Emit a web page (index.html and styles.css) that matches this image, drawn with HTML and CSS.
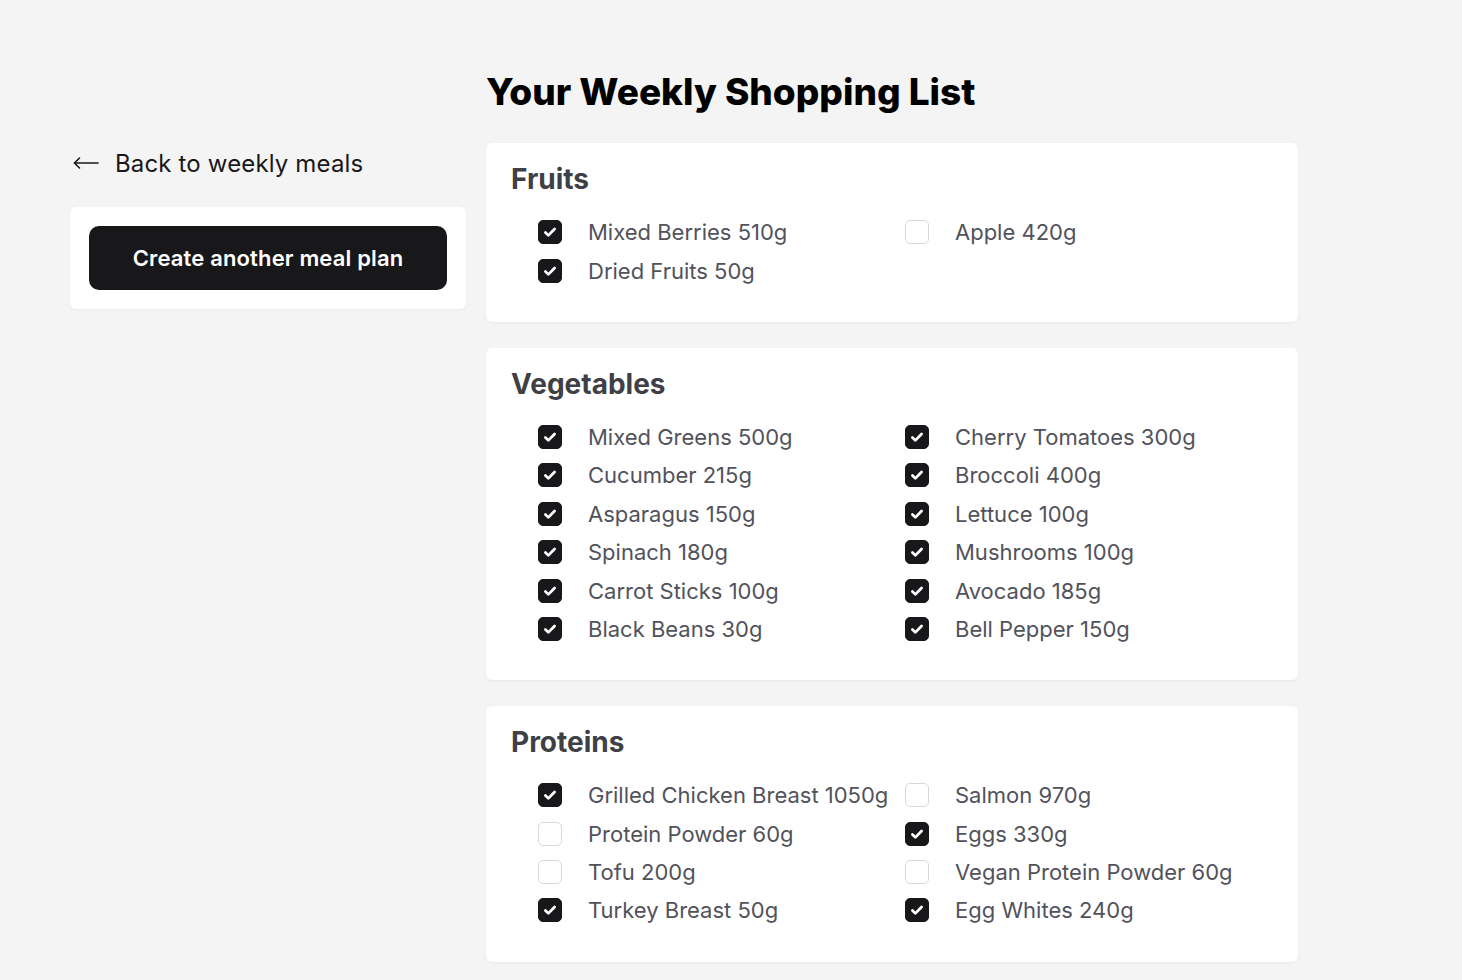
FILE: index.html
```html
<!DOCTYPE html>
<html lang="en">
<head>
<meta charset="utf-8">
<title>Your Weekly Shopping List</title>
<link rel="stylesheet" href="styles.css">
</head>
<body>
<div class="page">
  <aside class="side">
    <a class="back" href="#">
      <svg class="back-icon" width="26" height="14" viewBox="0 0 26 14" fill="none" stroke="#18181b" stroke-width="1.6" stroke-linecap="round" stroke-linejoin="round"><path d="M1.5 7H25"/><path d="M6.5 2L1.5 7L6.5 12"/></svg>
      <span>Back to weekly meals</span>
    </a>
    <div class="side-card">
      <button class="btn">Create another meal plan</button>
    </div>
  </aside>
  <main class="main">
    <h1 class="title">Your Weekly Shopping List</h1>

    <section class="card">
      <h2 class="card-title">Fruits</h2>
      <ul class="items">
        <li class="item"><span class="box checked"></span><span>Mixed Berries 510g</span></li>
        <li class="item"><span class="box"></span><span>Apple 420g</span></li>
        <li class="item"><span class="box checked"></span><span>Dried Fruits 50g</span></li>
      </ul>
    </section>

    <section class="card">
      <h2 class="card-title">Vegetables</h2>
      <ul class="items">
        <li class="item"><span class="box checked"></span><span>Mixed Greens 500g</span></li>
        <li class="item"><span class="box checked"></span><span>Cherry Tomatoes 300g</span></li>
        <li class="item"><span class="box checked"></span><span>Cucumber 215g</span></li>
        <li class="item"><span class="box checked"></span><span>Broccoli 400g</span></li>
        <li class="item"><span class="box checked"></span><span>Asparagus 150g</span></li>
        <li class="item"><span class="box checked"></span><span>Lettuce 100g</span></li>
        <li class="item"><span class="box checked"></span><span>Spinach 180g</span></li>
        <li class="item"><span class="box checked"></span><span>Mushrooms 100g</span></li>
        <li class="item"><span class="box checked"></span><span>Carrot Sticks 100g</span></li>
        <li class="item"><span class="box checked"></span><span>Avocado 185g</span></li>
        <li class="item"><span class="box checked"></span><span>Black Beans 30g</span></li>
        <li class="item"><span class="box checked"></span><span>Bell Pepper 150g</span></li>
      </ul>
    </section>

    <section class="card">
      <h2 class="card-title">Proteins</h2>
      <ul class="items">
        <li class="item"><span class="box checked"></span><span>Grilled Chicken Breast 1050g</span></li>
        <li class="item"><span class="box"></span><span>Salmon 970g</span></li>
        <li class="item"><span class="box"></span><span>Protein Powder 60g</span></li>
        <li class="item"><span class="box checked"></span><span>Eggs 330g</span></li>
        <li class="item"><span class="box"></span><span>Tofu 200g</span></li>
        <li class="item"><span class="box"></span><span>Vegan Protein Powder 60g</span></li>
        <li class="item"><span class="box checked"></span><span>Turkey Breast 50g</span></li>
        <li class="item"><span class="box checked"></span><span>Egg Whites 240g</span></li>
      </ul>
    </section>
  </main>
</div>
</body>
</html>
```
FILE: styles.css
```css
* { box-sizing: border-box; }
html, body { margin: 0; padding: 0; }
body {
  background: #f4f4f4;
  font-family: Inter, "Noto Sans", sans-serif;
  color: #18181b;
}
.page {
  display: flex;
  gap: 20px;
  padding: 72px 0 40px 70px;
}
.side {
  width: 396px;
  flex: none;
  padding-top: 75px;
}
.back {
  display: flex;
  align-items: center;
  gap: 16px;
  height: 32px;
  padding-left: 3px;
  font-size: 24px;
  letter-spacing: 0.15px;
  color: #18181b;
  text-decoration: none;
  margin-bottom: 28px;
}
.back-icon { flex: none; }
.side-card {
  background: #fff;
  border-radius: 6px;
  padding: 19px;
  box-shadow: 0 1px 2px rgba(0,0,0,0.04);
}
.btn {
  display: block;
  width: 100%;
  height: 64px;
  border: 0;
  border-radius: 10px;
  background: #18181b;
  color: #fff;
  font-family: Inter, "Noto Sans", sans-serif;
  font-size: 22px;
  font-weight: 600;
  letter-spacing: 0.15px;
  cursor: pointer;
}
.main {
  width: 812px;
  flex: none;
}
.title {
  margin: 0 0 31px 0;
  font-size: 37px;
  line-height: 40px;
  font-weight: 800;
  color: #000;
  letter-spacing: 0;
}
.card {
  background: #fff;
  border-radius: 6px;
  padding: 20px 26px 32px;
  margin-bottom: 26px;
  box-shadow: 0 1px 3px rgba(0,0,0,0.05);
}
.card-title {
  margin: 0 0 18px -1px;
  font-size: 28px;
  line-height: 32px;
  font-weight: 700;
  color: #3f3f46;
}
.items {
  list-style: none;
  margin: 0;
  padding: 0 0 0 26px;
  display: grid;
  grid-template-columns: 367px 1fr;
  grid-auto-rows: 38.4px;
}
.item {
  display: flex;
  align-items: center;
  gap: 26px;
  font-size: 22px;
  color: #52525b;
  white-space: nowrap;
}
.box {
  flex: none;
  width: 24px;
  height: 24px;
  border-radius: 5px;
  border: 1px solid #d9d9dc;
  background: #fff;
}
.box.checked {
  border-color: #18181b;
  background: #18181b url("data:image/svg+xml;utf8,<svg xmlns='http://www.w3.org/2000/svg' viewBox='0 0 24 24'><path d='M7 12.5l3.2 3.2 6.8-7' fill='none' stroke='white' stroke-width='3' stroke-linecap='round' stroke-linejoin='round'/></svg>") center/100% 100% no-repeat;
}
```
